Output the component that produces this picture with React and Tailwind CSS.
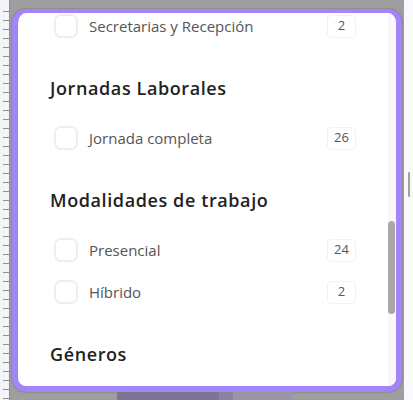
const rows = [
  { type: "item", label: "Secretarias y Recepción", count: 2 },
  { type: "head", label: "Jornadas Laborales" },
  { type: "item", label: "Jornada completa", count: 26 },
  { type: "head", label: "Modalidades de trabajo" },
  { type: "item", label: "Presencial", count: 24 },
  { type: "item", label: "Híbrido", count: 2 },
  { type: "head", label: "Géneros" },
];

function Ruler() {
  return (
    <div
      className="w-[10px] h-full bg-[#f3f4f7] border-r border-[#8f8f8f]"
      style={{
        backgroundImage:
          "repeating-linear-gradient(to bottom, transparent 0 8px, #8f8f8f 8px 9px)",
        backgroundSize: "6px 100%",
        backgroundPosition: "right 0 top 3px",
        backgroundRepeat: "no-repeat",
      }}
    />
  );
}

function Item({ label, count }) {
  return (
    <div className="flex items-center h-[42px] pl-[36px] pr-[32px]">
      <div className="w-[24px] h-[24px] rounded-[7px] border-2 border-[#eeeeee] bg-white" />
      <span className="ml-[11px] flex-1 text-[15px] text-[#555555]">{label}</span>
      <div className="w-[29px] h-[23px] flex items-center justify-center rounded-[4px] border border-[#f1f1f1] text-[13px] text-[#555555]">
        {count}
      </div>
    </div>
  );
}

function Heading({ label }) {
  return (
    <div className="pl-[32px] h-[70px] pt-[12px] flex items-center">
      <h3 className="text-[18px] font-semibold tracking-[0.6px] text-[#222222]">{label}</h3>
    </div>
  );
}

export default function App() {
  return (
    <div className="flex w-[413px] h-[400px] overflow-hidden font-['Open_Sans',sans-serif] bg-[#f8f9fc]">
      <Ruler />
      <div className="w-[394px] h-full bg-[#9e9e9e] flex flex-col">
        <div className="h-[9px]" />
        <div className="mx-[2px] h-[383px] rounded-[14px] border-x-[6px] border-t-[4px] border-b-[6px] border-[#a385fb] bg-white shadow-[0_0_2px_rgba(0,0,0,0.35)] flex overflow-hidden">
          <div className="flex-1 flex flex-col -mt-[8px]">
            {rows.map((r) =>
              r.type === "item" ? (
                <Item key={r.label} label={r.label} count={r.count} />
              ) : (
                <Heading key={r.label} label={r.label} />
              )
            )}
          </div>
          <div className="w-[8px] h-full bg-[#f8f8f8] flex flex-col">
            <div className="h-[208px]" />
            <div className="w-[7px] h-[93px] rounded-full bg-[#a8a8a8]" />
          </div>
        </div>
        <div className="flex h-[8px]">
          <div className="w-[107px]" />
          <div className="w-[102px] bg-[#7d7593]" />
          <div className="w-[14px] bg-[#8a83a0]" />
          <div className="w-[60px] bg-[#9a96a6]" />
        </div>
      </div>
      <div className="flex-1 flex flex-col items-center">
        <div className="h-[172px]" />
        <div className="w-[2px] h-[25px] bg-[#a0a0a0] rounded-full" />
      </div>
    </div>
  );
}
